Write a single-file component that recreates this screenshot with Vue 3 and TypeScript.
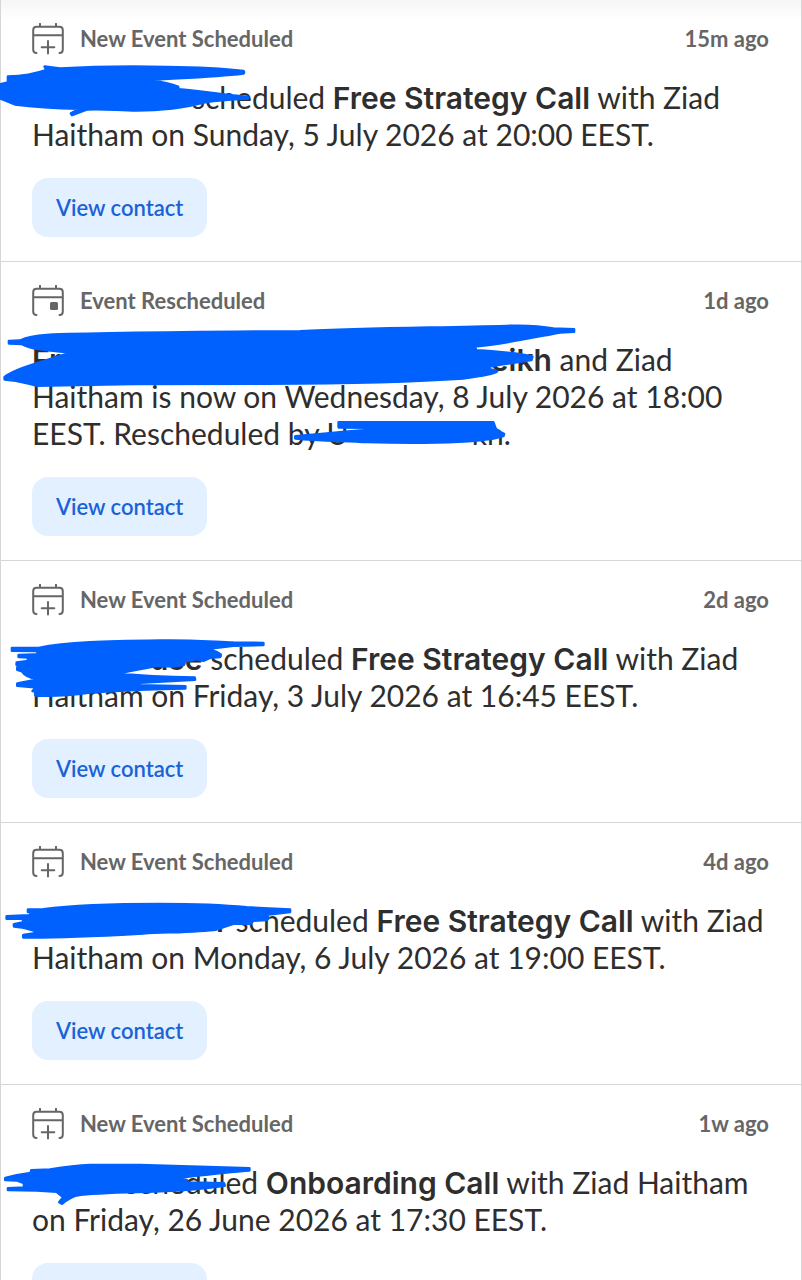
<script setup lang="ts">
interface Segment {
  kind: 'text' | 'bold' | 'hidden'
  text?: string
  width?: number
}

interface Activity {
  id: number
  icon: 'plus' | 'moved'
  title: string
  age: string
  message: Segment[]
  viewBox: string
  marks: string[]
}

const text = (value: string): Segment => ({ kind: 'text', text: value })
const bold = (value: string): Segment => ({ kind: 'bold', text: value })
const hidden = (width: number): Segment => ({ kind: 'hidden', width })

const activities: Activity[] = [
  {
    id: 1,
    icon: 'plus',
    title: 'New Event Scheduled',
    age: '15m ago',
    message: [
      hidden(160),
      text('scheduled '),
      bold('Free Strategy Call'),
      text(' with Ziad Haitham on Sunday, 5 July 2026 at 20:00 EEST.'),
    ],
    viewBox: '3 0 2400 600',
    marks: [
      'M134 200L180 206C280 200 400 199 500 201C600 202 680 207 730 213Q734 217 730 220C640 231 540 233 444 239C480 246 510 252 534 260L536 268C600 272 680 288 742 290Q746 293 742 296C680 298 640 300 600 310C560 322 480 331 410 331C350 330 300 325 262 328L216 345L213 340L240 326C150 324 90 319 45 313C30 308 10 297 -4 294L-4 254L24 248L24 230C60 229 100 224 140 210Z',
    ],
  },
  {
    id: 2,
    icon: 'moved',
    title: 'Event Rescheduled',
    age: '1d ago',
    message: [
      bold('Fr'),
      hidden(430),
      bold('eikh'),
      text(' and Ziad Haitham is now on Wednesday, 8 July 2026 at 18:00 EEST. Rescheduled by U'),
      hidden(123),
      text('kh.'),
    ],
    viewBox: '3 -54 2400 600',
    marks: [
      'M27 183L60 182C80 172 100 167 140 165C300 158 600 156 900 154C1100 144 1300 144 1520 138C1580 136 1630 140 1660 146L1722 148L1722 155L1680 157C1600 172 1510 192 1425 199L1428 211C1480 214 1550 219 1597 230L1594 240C1550 248 1500 252 1462 261L1470 268L1491 274C1480 284 1430 290 1390 295C1200 308 1000 310 800 311L400 312L110 317C80 310 60 303 40 301L14 298L14 291C50 265 120 248 212 218C160 212 100 210 66 192L27 190Z',
      'M1016 427L1480 427L1486 444L1492 452L1512 462L1510 468L1480 475C1400 487 1250 490 1100 486C1040 482 960 482 886 475L886 469C960 462 1080 450 1190 444L1016 442Z',
    ],
  },
  {
    id: 3,
    icon: 'plus',
    title: 'New Event Scheduled',
    age: '2d ago',
    message: [
      hidden(118),
      bold('use'),
      text(' scheduled '),
      bold('Free Strategy Call'),
      text(' with Ziad Haitham on Friday, 3 July 2026 at 16:45 EEST.'),
    ],
    viewBox: '3 -177 2400 600',
    marks: [
      'M36 84L116 84C200 66 320 64 480 62C560 60 640 66 700 68L790 69L790 75L700 77L620 87C640 92 656 96 662 104L660 111L630 113L610 122L590 117L555 124L552 134L520 139L470 137L438 144C410 148 380 155 352 161C420 168 510 172 584 173L585 179L420 188L414 196L556 199L556 205C450 206 340 212 270 217C220 224 150 228 106 226L106 215L98 213L110 202L52 197L52 191L90 183L110 176C90 174 74 166 66 154L52 149L52 143L70 140L50 135L50 128L84 123L84 112L56 111L56 105L120 103L108 93L36 92Z',
    ],
  },
  {
    id: 4,
    icon: 'plus',
    title: 'New Event Scheduled',
    age: '4d ago',
    message: [
      hidden(184),
      bold('r'),
      text(' scheduled '),
      bold('Free Strategy Call'),
      text(' with Ziad Haitham on Monday, 6 July 2026 at 19:00 EEST.'),
    ],
    viewBox: '3 -201 2400 600',
    marks: [
      'M84 59L130 58C220 46 350 42 480 42C600 42 680 46 740 52L870 59L870 66L800 74L806 83L800 90L760 92L752 101L700 101L650 118C600 126 500 126 430 130C320 136 180 144 70 142L70 135L104 130L104 122L66 112L42 109L42 103L74 96L66 86L20 86L20 79L88 76L96 67L84 66Z',
    ],
  },
  {
    id: 5,
    icon: 'plus',
    title: 'New Event Scheduled',
    age: '1w ago',
    message: [
      hidden(93),
      text('scheduled '),
      bold('Onboarding Call'),
      text(' with Ziad Haitham on Friday, 26 June 2026 at 17:30 EEST.'),
    ],
    viewBox: '3 -45 2400 600',
    marks: [
      'M94 211L150 209C200 200 230 196 270 195L420 195C520 199 640 202 748 205L748 211C680 216 600 226 514 235L560 240L562 248L672 250L674 257L620 264C560 270 500 274 440 275C360 277 280 278 230 286C210 292 200 300 186 311L178 306L190 292L170 275L110 271L24 270L24 265L72 263L72 249L50 241L16 240L16 234L50 226L92 219Z',
    ],
  },
]
</script>

<template>
  <main class="feed">
    <article v-for="item in activities" :key="item.id" class="activity">
      <header class="heading">
        <svg class="icon" viewBox="0 0 32 32" aria-hidden="true">
          <path d="M4.500 30Q1.200 30 1.200 26.500V7.200Q1.200 3.800 4.600 3.800H27.400Q30.800 3.800 30.800 7.200V26.500Q30.800 30 27.500 30M1.200 12.200H30.800M8 .8V3.800M24 .8V3.800" />
          <path v-if="item.icon === 'plus'" d="M16 18V30.500M9.700 24.200H22.300" />
          <rect v-else class="dot" x="18" y="17" width="8" height="8" rx="1.500" />
        </svg>
        <h2 class="title">{{ item.title }}</h2>
        <time class="age">{{ item.age }}</time>
      </header>
      <p class="message"><template v-for="(part, i) in item.message" :key="i"><strong v-if="part.kind === 'bold'">{{ part.text }}</strong><span v-else-if="part.kind === 'hidden'" class="hidden" :style="{ width: part.width + 'px' }"></span><span v-else>{{ part.text }}</span></template></p>
      <button type="button" class="contact">View contact</button>
      <svg class="marks" :viewBox="item.viewBox" aria-hidden="true">
        <path v-for="(mark, i) in item.marks" :key="i" :d="mark" />
      </svg>
    </article>
  </main>
</template>

<style>
html,
body {
  background: #fff;
}

body {
  height: 100vh;
  overflow: hidden;
}
</style>

<style scoped>
.feed {
  position: relative;
  border: solid #d6d6d6;
  border-width: 0 1px;
  background: #fff;
  font-family: Lato, "Liberation Sans", sans-serif;
  color: #2e2e2e;
}

.feed::before {
  content: "";
  position: absolute;
  inset: 0 0 auto;
  height: 20px;
  background: linear-gradient(#f6f6f6, #fff);
}

.activity {
  position: relative;
  padding: 23px 32px 24px 31px;
  border-bottom: 1px solid #d6d6d6;
}

.heading {
  display: flex;
  align-items: center;
  height: 32px;
  color: #666;
  font-size: 22px;
  line-height: 30px;
}

.icon {
  width: 32px;
  height: 32px;
  margin-right: 16px;
  fill: none;
  stroke: #666;
  stroke-width: 2;
  stroke-linecap: round;
}

.dot {
  fill: #666;
  stroke: none;
}

.title {
  flex: 1;
  margin: 0;
  font-size: inherit;
  font-weight: 700;
}

.age {
  font-weight: 700;
}

.message {
  margin: 24px 0 25px;
  font-size: 30px;
  line-height: 37px;
}

.message strong {
  font-family: Inter, Lato, sans-serif;
  font-size: 30px;
  font-weight: 600;
  line-height: 30px;
}

.hidden {
  display: inline-block;
}

.contact {
  display: block;
  height: 59px;
  padding: 0 24px;
  border: 0;
  border-radius: 16px;
  background: #e3f0ff;
  color: #1a62d6;
  font: 600 22px Lato, "Liberation Sans", sans-serif;
}

.marks {
  position: absolute;
  top: 0;
  left: 0;
  width: 800px;
  height: 200px;
  overflow: visible;
  pointer-events: none;
  fill: #0061fe;
  stroke: #0061fe;
  stroke-width: 8;
  stroke-linejoin: round;
}
</style>
